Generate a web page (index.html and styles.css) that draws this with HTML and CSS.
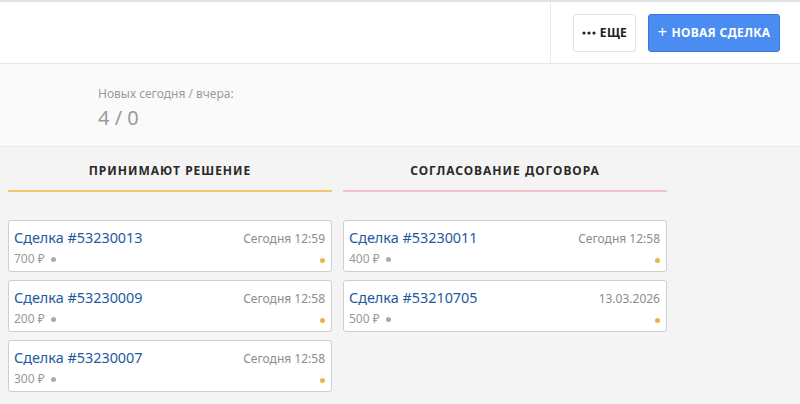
FILE: index.html
```html
<!DOCTYPE html>
<html lang="ru">
<head>
    <meta charset="utf-8">
    <title>Сделки</title>
    <link rel="stylesheet" href="styles.css">
</head>
<body>
    <header class="topbar">
        <div class="topbar-left"></div>
        <div class="topbar-actions">
            <button class="btn btn-more" type="button">
                <svg class="dots" width="14" height="4" viewBox="0 0 14 4"><circle cx="2" cy="2" r="1.6"/><circle cx="7" cy="2" r="1.6"/><circle cx="12" cy="2" r="1.6"/></svg>
                ЕЩЕ
            </button>
            <button class="btn btn-primary" type="button"><span class="plus">+</span> НОВАЯ СДЕЛКА</button>
        </div>
    </header>

    <section class="stats">
        <div class="stats-label">Новых сегодня / вчера:</div>
        <div class="stats-value">4 / 0</div>
    </section>

    <main class="board">
        <div class="column">
            <div class="column-title yellow">ПРИНИМАЮТ РЕШЕНИЕ</div>
            <div class="cards">
                <div class="card">
                    <div class="card-row">
                        <a class="card-name" href="#">Сделка #53230013</a>
                        <span class="card-date">Сегодня 12:59</span>
                    </div>
                    <div class="card-row">
                        <span class="card-sum">700 ₽ <span class="dot grey"></span></span>
                        <span class="dot orange"></span>
                    </div>
                </div>
                <div class="card">
                    <div class="card-row">
                        <a class="card-name" href="#">Сделка #53230009</a>
                        <span class="card-date">Сегодня 12:58</span>
                    </div>
                    <div class="card-row">
                        <span class="card-sum">200 ₽ <span class="dot grey"></span></span>
                        <span class="dot orange"></span>
                    </div>
                </div>
                <div class="card">
                    <div class="card-row">
                        <a class="card-name" href="#">Сделка #53230007</a>
                        <span class="card-date">Сегодня 12:58</span>
                    </div>
                    <div class="card-row">
                        <span class="card-sum">300 ₽ <span class="dot grey"></span></span>
                        <span class="dot orange"></span>
                    </div>
                </div>
            </div>
        </div>

        <div class="column">
            <div class="column-title pink">СОГЛАСОВАНИЕ ДОГОВОРА</div>
            <div class="cards">
                <div class="card">
                    <div class="card-row">
                        <a class="card-name" href="#">Сделка #53230011</a>
                        <span class="card-date">Сегодня 12:58</span>
                    </div>
                    <div class="card-row">
                        <span class="card-sum">400 ₽ <span class="dot grey"></span></span>
                        <span class="dot orange"></span>
                    </div>
                </div>
                <div class="card">
                    <div class="card-row">
                        <a class="card-name" href="#">Сделка #53210705</a>
                        <span class="card-date">13.03.2026</span>
                    </div>
                    <div class="card-row">
                        <span class="card-sum">500 ₽ <span class="dot grey"></span></span>
                        <span class="dot orange"></span>
                    </div>
                </div>
            </div>
        </div>
    </main>
</body>
</html>
```

FILE: styles.css
```css
/* Общие стили */
body {
    margin: 0;
    font-family: "Noto Sans", "Open Sans", sans-serif;
    background-color: #f4f4f4;
    color: #333;
}

/* Верхняя панель */
.topbar {
    display: flex;
    height: 64px;
    background-color: #fff;
    border-top: 2px solid #e2e2e2;
    border-bottom: 1px solid #e6e6e6;
    box-sizing: border-box;
}

.topbar-left {
    flex: 1;
}

.topbar-actions {
    display: flex;
    align-items: center;
    gap: 12px;
    padding: 0 20px 0 22px;
    border-left: 1px solid #ececec;
}

.btn {
    display: flex;
    align-items: center;
    justify-content: center;
    gap: 4px;
    height: 38px;
    border-radius: 3px;
    font-family: inherit;
    font-size: 12px;
    font-weight: 700;
    letter-spacing: 0.3px;
    white-space: nowrap;
    cursor: pointer;
    padding: 0;
}

.btn-more {
    background-color: #fff;
    border: 1px solid #e3e3e3;
    color: #222;
    width: 63px;
}

.btn-more .dots {
    fill: #222;
}

.btn-primary {
    background-color: #4a8cf0;
    border: 1px solid #3a78d8;
    color: #fff;
    width: 132px;
}

.btn-primary .plus {
    font-size: 17px;
    font-weight: 400;
    line-height: 1;
    margin-top: -2px;
}

/* Статистика */
.stats {
    height: 83px;
    background-color: #fafafa;
    border-bottom: 1px solid #e8e8e8;
    padding: 21px 0 0 98px;
    box-sizing: border-box;
}

.stats-label {
    font-size: 12px;
    color: #9a9a9a;
}

.stats-value {
    font-size: 20px;
    color: #9a9a9a;
    margin-top: 2px;
}

/* Колонки */
.board {
    display: flex;
    gap: 11px;
    padding: 0 8px;
}

.column {
    width: 324px;
}

.column-title {
    height: 43px;
    line-height: 47px;
    text-align: center;
    font-size: 12px;
    font-weight: 700;
    letter-spacing: 1px;
    color: #2a2a2a;
}

.column-title.yellow {
    border-bottom: 2px solid #f4c768;
}

.column-title.pink {
    border-bottom: 2px solid #f6c4c8;
}

.cards {
    display: flex;
    flex-direction: column;
    gap: 8px;
    margin-top: 28px;
}

/* Карточки */
.card {
    background-color: #fff;
    border: 1px solid #cfcfcf;
    border-radius: 3px;
    height: 52px;
    box-sizing: border-box;
    padding: 5px 6px 0 5px;
}

.card-row {
    display: flex;
    justify-content: space-between;
    align-items: center;
}

.card-name {
    color: #1d5a9e;
    font-size: 14.4px;
    text-decoration: none;
    line-height: 24px;
}

.card-date {
    color: #8c8c8c;
    font-size: 12px;
}

.card-sum {
    color: #999;
    font-size: 12px;
    line-height: 17px;
}

.dot {
    display: inline-block;
    width: 5px;
    height: 5px;
    border-radius: 50%;
}

.dot.grey {
    background-color: #aaa;
    margin-left: 3px;
    vertical-align: 1px;
}

.dot.orange {
    background-color: #e9b44a;
    margin-top: 3px;
}
```
